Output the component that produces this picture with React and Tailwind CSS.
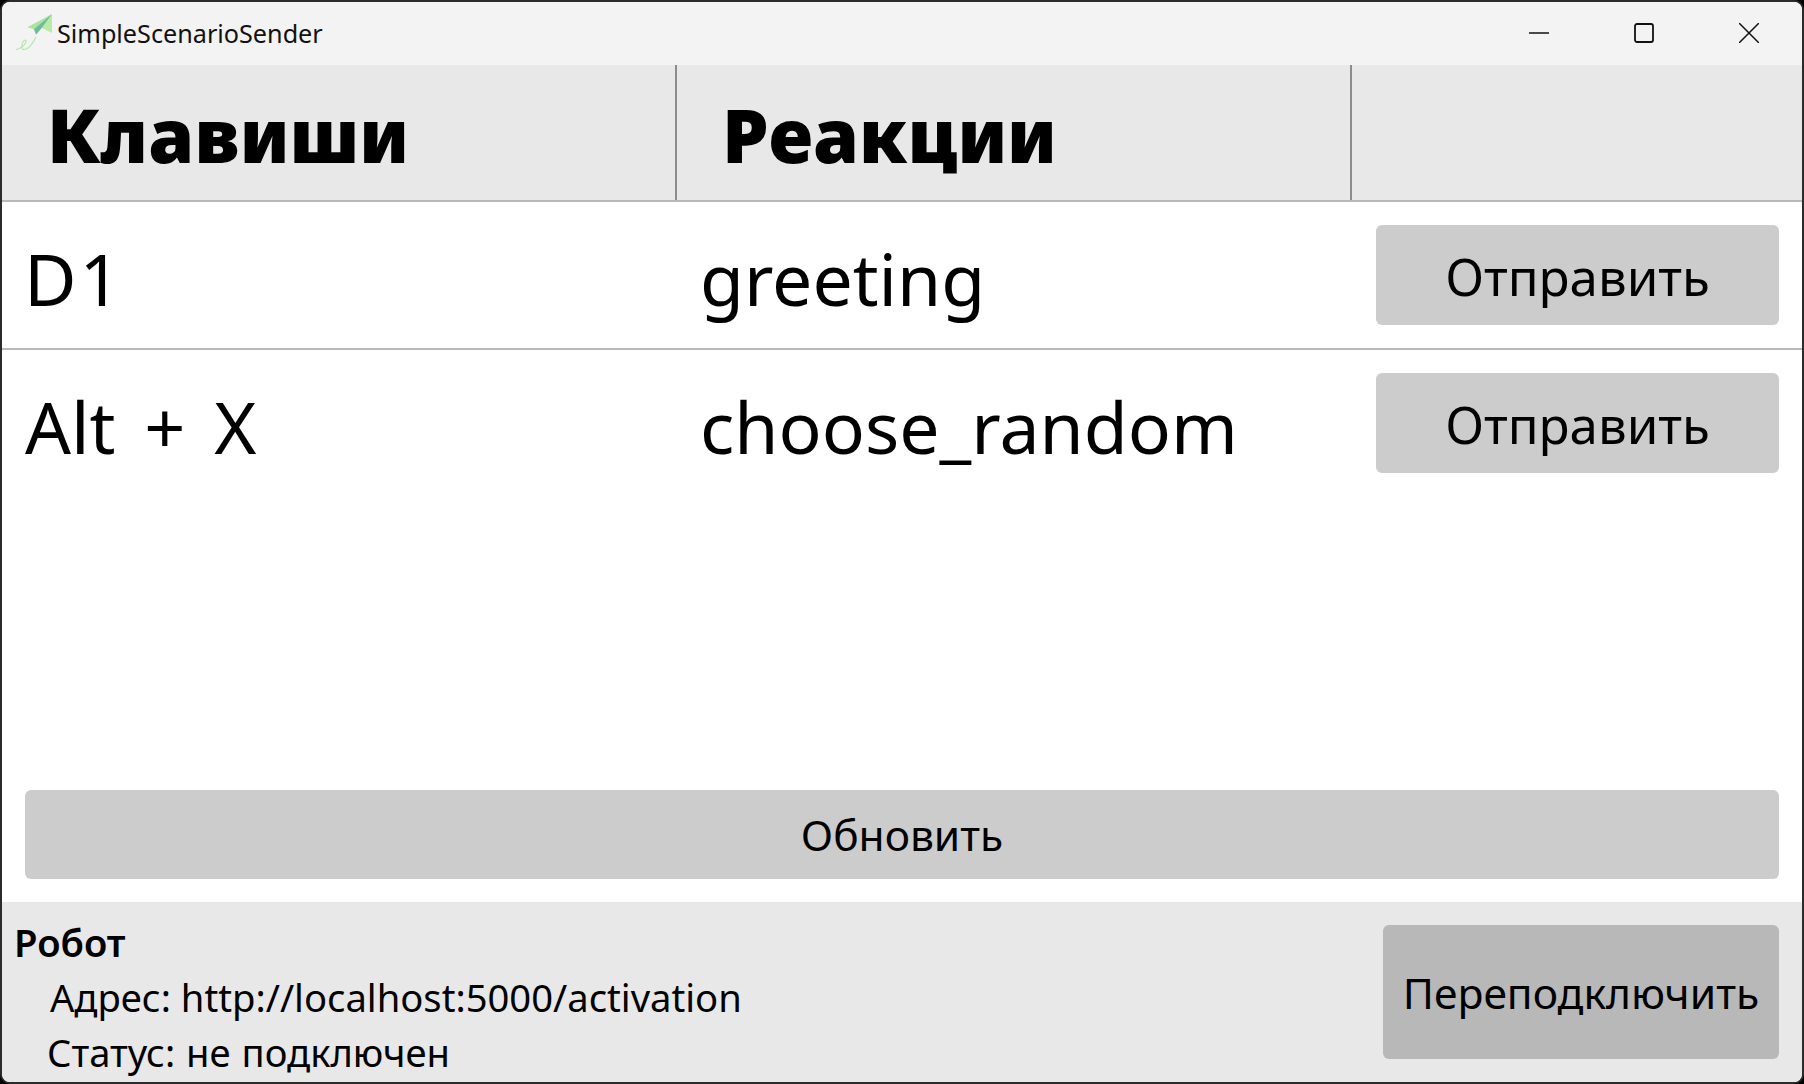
import React from 'react';

const rows = [
  { keys: 'D1', reaction: 'greeting', keyClass: 'tracking-[3px] pl-[22px]' },
  { keys: 'Alt + X', reaction: 'choose_random', keyClass: '[word-spacing:10px] pl-[23px]' },
];

const PlaneIcon = () => (
  <svg width="40" height="40" viewBox="0 0 40 40" className="shrink-0">
    <path d="M38 2 L13.3 15.3 L20 17.3 L27.7 16 Z" fill="#a9e5a0" />
    <path d="M38 2 L27.7 16 L38 21 Z" fill="#b9eaa8" />
    <path d="M38 2 L20 17.3 L22 22.7 L27.7 16 Z" fill="#6dbd98" />
    <path d="M22 25 C19 31 15 37 10.5 37.5 C7 38 7.5 32 9 30 C11 27 13 28 11.5 31 C10 34 6 36.5 2 37.7" fill="none" stroke="#b5e8a8" strokeWidth="1.2" />
  </svg>
);

export default function App() {
  return (
    <div className="w-[1804px] h-[1084px] bg-black font-['Noto_Sans',sans-serif] text-black">
      <div className="w-full h-full flex flex-col overflow-hidden rounded-[10px] border-2 border-[#2b2b2b] bg-white">
        {/* TITLE BAR */}
        <div className="h-[63px] shrink-0 bg-[#f3f3f3] flex items-center">
          <div className="ml-[12px] mb-[3px]"><PlaneIcon /></div>
          <span className="ml-[3px] text-[25.2px] leading-none text-[#111]">SimpleScenarioSender</span>
          <div className="ml-auto flex items-center mr-[43px] mb-[2px] gap-[85px]">
            <svg width="20" height="20" viewBox="0 0 20 20"><path d="M0 10H20" stroke="#111" strokeWidth="1.5" /></svg>
            <svg width="20" height="20" viewBox="0 0 20 20"><rect x="1" y="1" width="18" height="18" rx="2" fill="none" stroke="#111" strokeWidth="1.8" /></svg>
            <svg width="20" height="20" viewBox="0 0 20 20"><path d="M0 0L20 20M20 0L0 20" stroke="#111" strokeWidth="1.5" /></svg>
          </div>
        </div>

        {/* HEADER */}
        <div className="h-[137px] shrink-0 bg-[#e8e8e8] border-b-2 border-[#b9b9b9] flex font-black text-[74px]">
          <div className="w-[675px] border-r-2 border-[#8c8c8c] flex items-center pl-[45px] pt-[4px]">Клавиши</div>
          <div className="w-[675px] border-r-2 border-[#8c8c8c] flex items-center pl-[45px] pt-[4px]">Реакции</div>
        </div>

        {/* ROWS */}
        <div className="flex-1 flex flex-col">
          {rows.map((r) => (
            <div key={r.keys} className="h-[148px] shrink-0 border-b-2 border-[#b9b9b9] last:border-transparent flex items-center text-[72px]">
              <div className={`w-[675px] pt-[6px] ${r.keyClass}`}>{r.keys}</div>
              <div className="w-[699px] pl-[23px] pt-[7px] text-[71.5px]">{r.reaction}</div>
              <button className="w-[403px] h-[100px] rounded-[6px] bg-[#cccccc] text-[51px] pt-[2px]">Отправить</button>
            </div>
          ))}
        </div>

        {/* UPDATE */}
        <div className="shrink-0 px-[23px] pb-[23px]">
          <button className="w-full h-[89px] rounded-[6px] bg-[#cccccc] text-[42.5px]">Обновить</button>
        </div>

        {/* ROBOT PANEL */}
        <div className="h-[180px] shrink-0 bg-[#e8e8e8] flex items-center">
          <div className="flex-1 pl-[12px] pt-[10px] text-[38.2px] leading-[55px]">
            <div className="font-semibold">Робот</div>
            <div className="pl-[36px]">Адрес: http://localhost:5000/activation</div>
            <div className="pl-[33px] [word-spacing:1px]">Статус: не подключен</div>
          </div>
          <button className="w-[396px] h-[134px] mr-[23px] rounded-[6px] bg-[#b8b8b8] text-[42.6px] pt-[1px]">Переподключить</button>
        </div>
      </div>
    </div>
  );
}
